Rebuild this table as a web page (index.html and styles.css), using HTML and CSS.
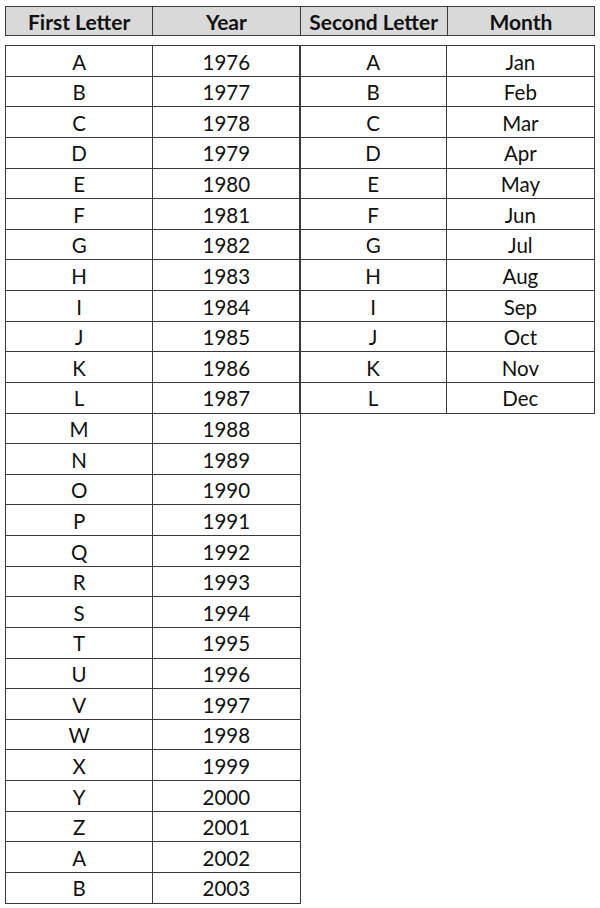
FILE: index.html
```html
<!DOCTYPE html>
<html>
<head>
<meta charset="utf-8">
<link rel="stylesheet" href="styles.css">
</head>
<body>
<div class="page">
  <table class="head">
    <tr><th>First Letter</th><th>Year</th><th>Second Letter</th><th>Month</th></tr>
  </table>
  <div class="tables">
    <table class="grid left">
      <tr><td>A</td><td>1976</td></tr>
      <tr><td>B</td><td>1977</td></tr>
      <tr><td>C</td><td>1978</td></tr>
      <tr><td>D</td><td>1979</td></tr>
      <tr><td>E</td><td>1980</td></tr>
      <tr><td>F</td><td>1981</td></tr>
      <tr><td>G</td><td>1982</td></tr>
      <tr><td>H</td><td>1983</td></tr>
      <tr><td>I</td><td>1984</td></tr>
      <tr><td>J</td><td>1985</td></tr>
      <tr><td>K</td><td>1986</td></tr>
      <tr><td>L</td><td>1987</td></tr>
      <tr><td>M</td><td>1988</td></tr>
      <tr><td>N</td><td>1989</td></tr>
      <tr><td>O</td><td>1990</td></tr>
      <tr><td>P</td><td>1991</td></tr>
      <tr><td>Q</td><td>1992</td></tr>
      <tr><td>R</td><td>1993</td></tr>
      <tr><td>S</td><td>1994</td></tr>
      <tr><td>T</td><td>1995</td></tr>
      <tr><td>U</td><td>1996</td></tr>
      <tr><td>V</td><td>1997</td></tr>
      <tr><td>W</td><td>1998</td></tr>
      <tr><td>X</td><td>1999</td></tr>
      <tr><td>Y</td><td>2000</td></tr>
      <tr><td>Z</td><td>2001</td></tr>
      <tr><td>A</td><td>2002</td></tr>
      <tr><td>B</td><td>2003</td></tr>
    </table>
    <table class="grid right">
      <tr><td>A</td><td>Jan</td></tr>
      <tr><td>B</td><td>Feb</td></tr>
      <tr><td>C</td><td>Mar</td></tr>
      <tr><td>D</td><td>Apr</td></tr>
      <tr><td>E</td><td>May</td></tr>
      <tr><td>F</td><td>Jun</td></tr>
      <tr><td>G</td><td>Jul</td></tr>
      <tr><td>H</td><td>Aug</td></tr>
      <tr><td>I</td><td>Sep</td></tr>
      <tr><td>J</td><td>Oct</td></tr>
      <tr><td>K</td><td>Nov</td></tr>
      <tr><td>L</td><td>Dec</td></tr>
    </table>
  </div>
</div>
</body>
</html>
```
FILE: styles.css
```css
html, body {
  margin: 0;
  padding: 0;
  background: #ffffff;
}
.page {
  padding: 6px 0 0 5px;
  font-family: Lato, "Open Sans", "Liberation Sans", sans-serif;
  color: #111;
}
table {
  border-collapse: collapse;
  table-layout: fixed;
}
.head {
  width: 590px;
  background: #d9d9d9;
}
.head th {
  height: 28px;
  padding: 0;
  border: 1.5px solid #3a3a3a;
  font-weight: 700;
  font-size: 21px;
  line-height: 1;
  text-align: center;
  vertical-align: middle;
}
.tables {
  display: flex;
  align-items: flex-start;
  margin-top: 9px;
}
.grid td {
  height: 30.64px;
  padding: 2px 0 0;
  box-sizing: border-box;
  border: 1.5px solid #3a3a3a;
  text-align: center;
  vertical-align: middle;
  font-size: 20.5px;
  line-height: 1;
}
.left {
  width: 295.5px;
}
.right {
  width: 295.5px;
  margin-left: -1.5px;
}
```
